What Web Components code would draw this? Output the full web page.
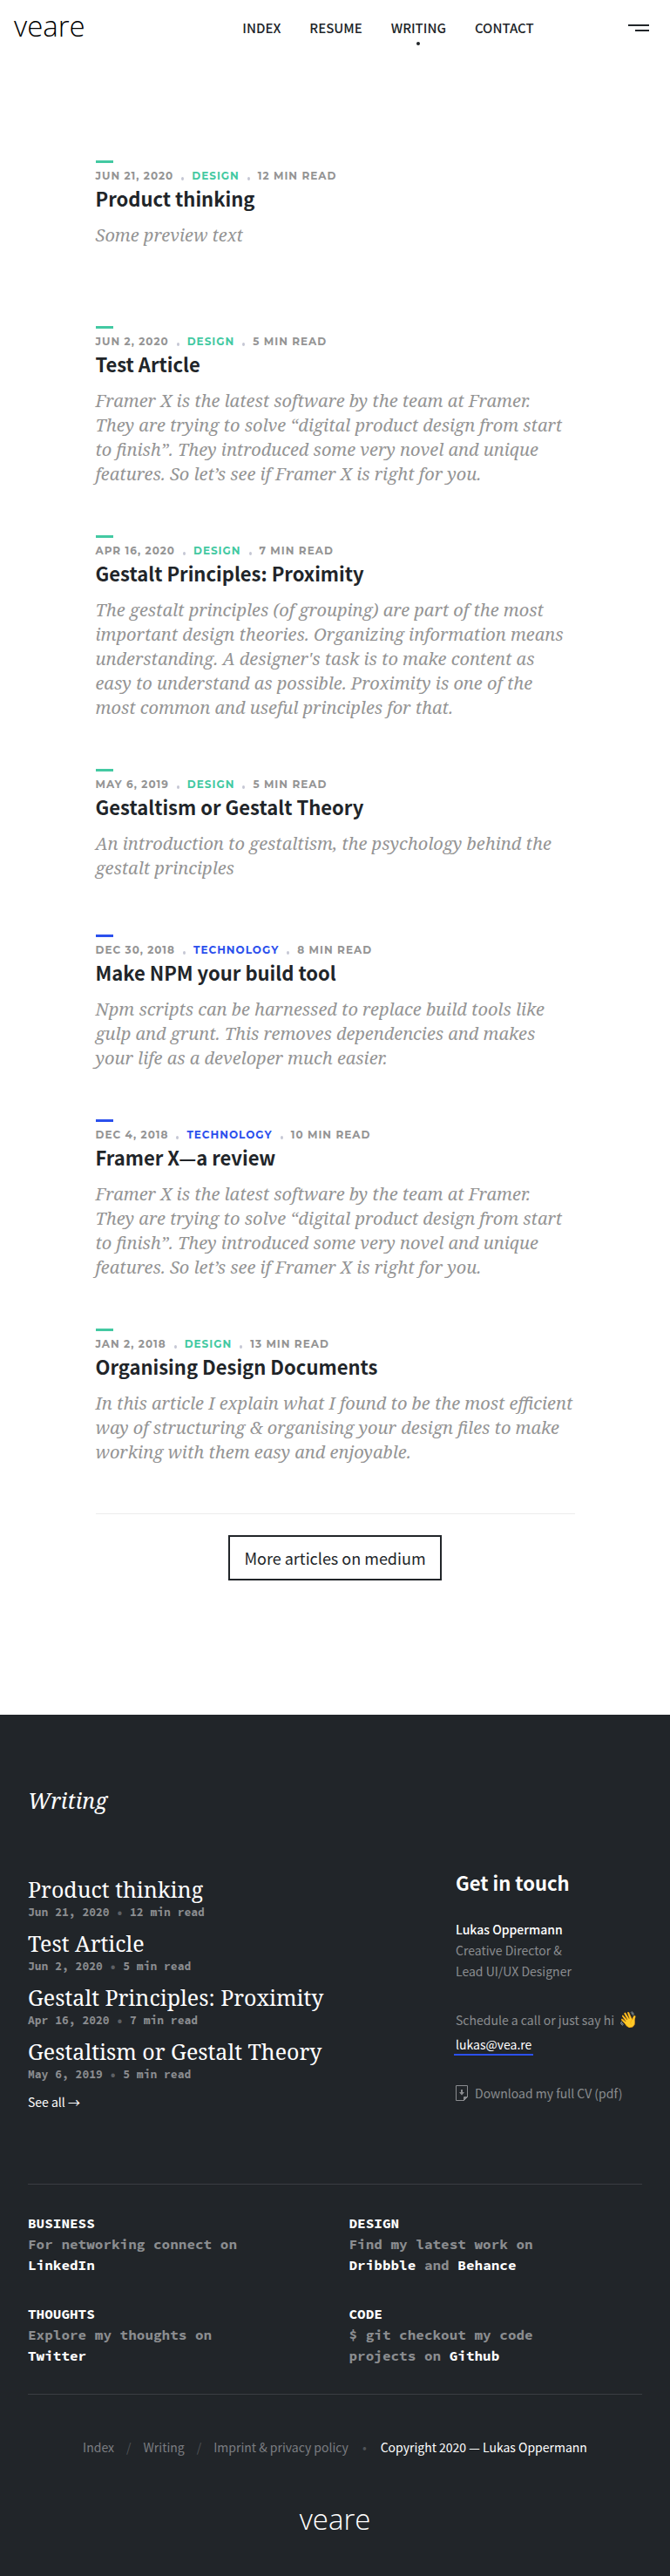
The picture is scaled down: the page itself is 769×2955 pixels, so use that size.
<!DOCTYPE html>
<html lang="en">
<head>
<meta charset="utf-8">
<meta name="viewport" content="width=device-width, initial-scale=1">
<title>veare – Writing</title>
<style>
  :root {
    --ink: #212529;
    --grey: #949494;
    --night: #212529;
    --green: #43c9a2;
    --blue: #2b50ed;
    --sans: "Noto Sans CJK JP", "Open Sans", sans-serif;
    --serif: "Noto Serif", "Liberation Serif", serif;
    --mono: "Source Code Pro", "Liberation Mono", monospace;
    --caps: "Montserrat", "Inter", sans-serif;
  }
  body { margin: 0; background: #fff; color: var(--ink); font: 400 14px/24px var(--sans); }
</style>
</head>
<body>
<site-header></site-header>
<article-list>
  <article-preview date="Jun 21, 2020" topic="Design" read="12 min read" heading="Product thinking">Some preview text</article-preview>
  <article-preview date="Jun 2, 2020" topic="Design" read="5 min read" heading="Test Article">Framer X is the latest software by the team at Framer. They are trying to solve “digital product design from start to finish”. They introduced some very novel and unique features. So let’s see if Framer X is right for you.</article-preview>
  <article-preview date="Apr 16, 2020" topic="Design" read="7 min read" heading="Gestalt Principles: Proximity">The gestalt principles (of grouping) are part of the most important design theories. Organizing information means understanding. A designer's task is to make content as easy to understand as possible. Proximity is one of the most common and useful principles for that.</article-preview>
  <article-preview date="May 6, 2019" topic="Design" read="5 min read" heading="Gestaltism or Gestalt Theory">An introduction to gestaltism, the psychology behind the gestalt principles</article-preview>
  <article-preview date="Dec 30, 2018" topic="Technology" read="8 min read" heading="Make NPM your build tool">Npm scripts can be harnessed to replace build tools like gulp and grunt. This removes dependencies and makes your life as a developer much easier.</article-preview>
  <article-preview date="Dec 4, 2018" topic="Technology" read="10 min read" heading="Framer X—a review">Framer X is the latest software by the team at Framer. They are trying to solve “digital product design from start to finish”. They introduced some very novel and unique features. So let’s see if Framer X is right for you.</article-preview>
  <article-preview date="Jan 2, 2018" topic="Design" read="13 min read" heading="Organising Design Documents">In this article I explain what I found to be the most efficient way of structuring &amp; organising your design files to make working with them easy and enjoyable.</article-preview>
  <a slot="more" href="#medium">More articles on medium</a>
</article-list>
<site-footer></site-footer>

<script>
const define = (name, html, setup) => customElements.define(name, class extends HTMLElement {
  connectedCallback() {
    if (this.shadowRoot) return;
    const root = this.attachShadow({ mode: 'open' });
    root.innerHTML = html;
    if (setup) setup(this, root);
  }
});

define('brand-logo', `
  <style>
    :host { display: block; }
    a { display: block; font: 350 33px/40px "Open Sans", sans-serif; color: inherit; text-decoration: none; }
  </style>
  <a href="#home">veare</a>`);

define('menu-button', `
  <style>
    :host { display: block; }
    button { display: grid; gap: 4px; justify-items: end; width: 24px; padding: 0; border: 0; background: none; cursor: pointer; }
    i { display: block; width: 24px; height: 2px; background: var(--ink); }
    i + i { width: 16px; }
  </style>
  <button type="button" aria-label="Menu"><i></i><i></i></button>`);

define('site-header', `
  <style>
    :host { display: grid; grid-template-columns: auto 5fr auto 3fr auto; align-items: center; height: 64px; padding: 0 24px 0 16px; }
    brand-logo { color: #000; margin-bottom: 4px; }
    nav { grid-column: 3; display: flex; gap: 33px; }
    menu-button { grid-column: 5; }
    a { position: relative; font: 500 15px/24px var(--sans); color: var(--ink); text-decoration: none; text-transform: uppercase; }
    a[aria-current]::after { content: ""; position: absolute; left: calc(50% - 2px); bottom: -8px; width: 4px; height: 4px; border-radius: 50%; background: var(--ink); }
  </style>
  <brand-logo></brand-logo>
  <nav>
    <a href="#index">Index</a><a href="#resume">Resume</a><a href="#writing" aria-current="page">Writing</a><a href="#contact">Contact</a>
  </nav>
  <menu-button></menu-button>`);

define('article-preview', `
  <style>
    :host { display: block; box-sizing: border-box; min-height: 190px; padding-bottom: 56px; --accent: var(--green); }
    :host([topic="Technology"]) { --accent: var(--blue); }
    .bar { width: 20px; height: 3px; margin-bottom: 6px; background: var(--accent); }
    .meta { display: flex; gap: 9px; font: 700 12px/18px var(--caps); letter-spacing: 1px; text-transform: uppercase; color: var(--grey); }
    .meta a { color: var(--accent); text-decoration: none; }
    .sep { width: 3px; height: 4px; margin: 10px 0 0; border-radius: 50%; background: #c5c7d4; }
    h2 { margin: 0 0 13px; font: 700 22px/32px var(--sans); }
    h2 a { color: var(--ink); text-decoration: none; }
    p { max-width: 548px; margin: 0; font: italic 400 20px/28px var(--serif); color: var(--grey); }
  </style>
  <div class="bar"></div>
  <div class="meta"><span class="date"></span><i class="sep"></i><a class="topic" href="#topic"></a><i class="sep"></i><span class="read"></span></div>
  <h2><a href="#article"></a></h2>
  <p><slot></slot></p>`,
  (host, root) => {
    for (const key of ['date', 'topic', 'read']) root.querySelector('.' + key).textContent = host.getAttribute(key);
    root.querySelector('h2 a').textContent = host.getAttribute('heading');
  });

define('article-list', `
  <style>
    :host { display: block; max-width: 550px; margin: 0 auto; padding: 120px 16px 154px; }
    .more { display: flex; justify-content: center; padding-top: 24px; border-top: 1px solid #ececec; }
    ::slotted(a) { padding: 0 16px; border: 2px solid var(--ink); font: 400 18px/48px var(--sans); color: var(--ink); text-decoration: none; }
  </style>
  <main><slot></slot></main>
  <div class="more"><slot name="more"></slot></div>`);

define('recent-article', `
  <style>
    :host { display: block; }
    a { display: block; font: 400 25px/36px var(--serif); color: #fff; text-decoration: none; }
    p { margin: 0; font: 700 13px/18px var(--mono); color: #8b8d90; }
    i { font-style: normal; color: #5d6064; }
  </style>
  <a href="#article"><slot></slot></a>
  <p><span class="date"></span> <i>•</i> <span class="read"></span></p>`,
  (host, root) => {
    for (const key of ['date', 'read']) root.querySelector('.' + key).textContent = host.getAttribute(key);
  });

define('contact-card', `
  <style>
    :host { display: block; color: #8b8d90; }
    h3 { margin: 0 0 26px; font: 700 22px/32px var(--sans); color: #fff; }
    p { margin: 0; }
    strong { font-weight: 500; color: #fff; }
    .hi { margin-top: 32px; white-space: nowrap; height: 24px; }
    .mail { display: inline-block; margin: 5px 0 0 -2px; padding: 0 2px; line-height: 22px; border-bottom: 2px solid var(--blue); color: #fff; text-decoration: none; }
    .cv { display: flex; align-items: center; gap: 8px; margin-top: 31px; color: inherit; text-decoration: none; white-space: nowrap; }
    .emoji { margin-left: 2px; font: 18px/24px "Noto Color Emoji", sans-serif; }
  </style>
  <h3>Get in touch</h3>
  <p><strong>Lukas Oppermann</strong><br>Creative Director &amp;<br>Lead UI/UX Designer</p>
  <p class="hi">Schedule a call or just say hi <span class="emoji">👋</span></p>
  <a class="mail" href="mailto:lukas@vea.re">lukas@vea.re</a>
  <a class="cv" href="#cv">
    <svg width="14" height="18" viewBox="0 0 14 18" aria-hidden="true" fill="none" stroke="currentColor"><path d="M.5.5h13v13l-4 4h-9z"/><path d="M9.500 17.500v-4h4z" fill="currentColor"/><path d="M6 5h2v3h2L7 11.500 4 8h2z" fill="currentColor" stroke="none"/></svg>
    Download my full CV (pdf)</a>`);

define('social-link', `
  <style>
    :host { display: block; font: 700 16px/24px var(--mono); color: #8b8d90; }
    h4 { margin: 0; font: inherit; color: #fff; text-transform: uppercase; }
    p { margin: 0; max-width: 272px; }
  </style>
  <h4></h4>
  <p><slot></slot></p>`,
  (host, root) => { root.querySelector('h4').textContent = host.getAttribute('heading'); });

define('site-footer', `
  <style>
    :host { display: block; padding: 80px 32px 45px; background: var(--night); color: #fff; }
    a { color: inherit; text-decoration: none; }
    h2 { margin: 0 0 60px; font: italic 400 25px/36px var(--serif); }
    .top { display: grid; grid-template-columns: 1fr 214px; padding-bottom: 82px; }
    .recent { display: grid; gap: 8px; align-content: start; padding-top: 6px; }
    .recent > a { margin-top: 2px; }
    .social { display: grid; grid-template-columns: 1fr 1fr; gap: 32px; padding: 32px 0; border: 1px solid #3a3d42; border-width: 1px 0; }
    .social a { color: #fff; }
    .legal { display: flex; justify-content: center; margin: 48px 0 51px; color: #7b7d81; white-space: nowrap; }
    .legal i { font-style: normal; color: #505357; margin: 0 14px; }
    .legal i.dot { margin: 0 16px; }
    .legal strong { font-weight: 400; color: #fff; }
    brand-logo { width: max-content; margin: 0 auto; }
  </style>
  <h2>Writing</h2>
  <div class="top">
    <div class="recent">
      <recent-article date="Jun 21, 2020" read="12 min read">Product thinking</recent-article>
      <recent-article date="Jun 2, 2020" read="5 min read">Test Article</recent-article>
      <recent-article date="Apr 16, 2020" read="7 min read">Gestalt Principles: Proximity</recent-article>
      <recent-article date="May 6, 2019" read="5 min read">Gestaltism or Gestalt Theory</recent-article>
      <a href="#writing">See all →</a>
    </div>
    <contact-card></contact-card>
  </div>
  <div class="social">
    <social-link heading="Business">For networking connect on <a href="#linkedin">LinkedIn</a></social-link>
    <social-link heading="Design">Find my latest work on <a href="#dribbble">Dribbble</a> and <a href="#behance">Behance</a></social-link>
    <social-link heading="Thoughts">Explore my thoughts on <a href="#twitter">Twitter</a></social-link>
    <social-link heading="Code">$ git checkout my code projects on <a href="#github">Github</a></social-link>
  </div>
  <div class="legal"><a href="#index">Index</a><i>/</i><a href="#writing">Writing</a><i>/</i><a href="#imprint">Imprint &amp; privacy policy</a><i class="dot">•</i><strong>Copyright 2020 — Lukas Oppermann</strong></div>
  <brand-logo></brand-logo>`);
</script>
</body>
</html>
